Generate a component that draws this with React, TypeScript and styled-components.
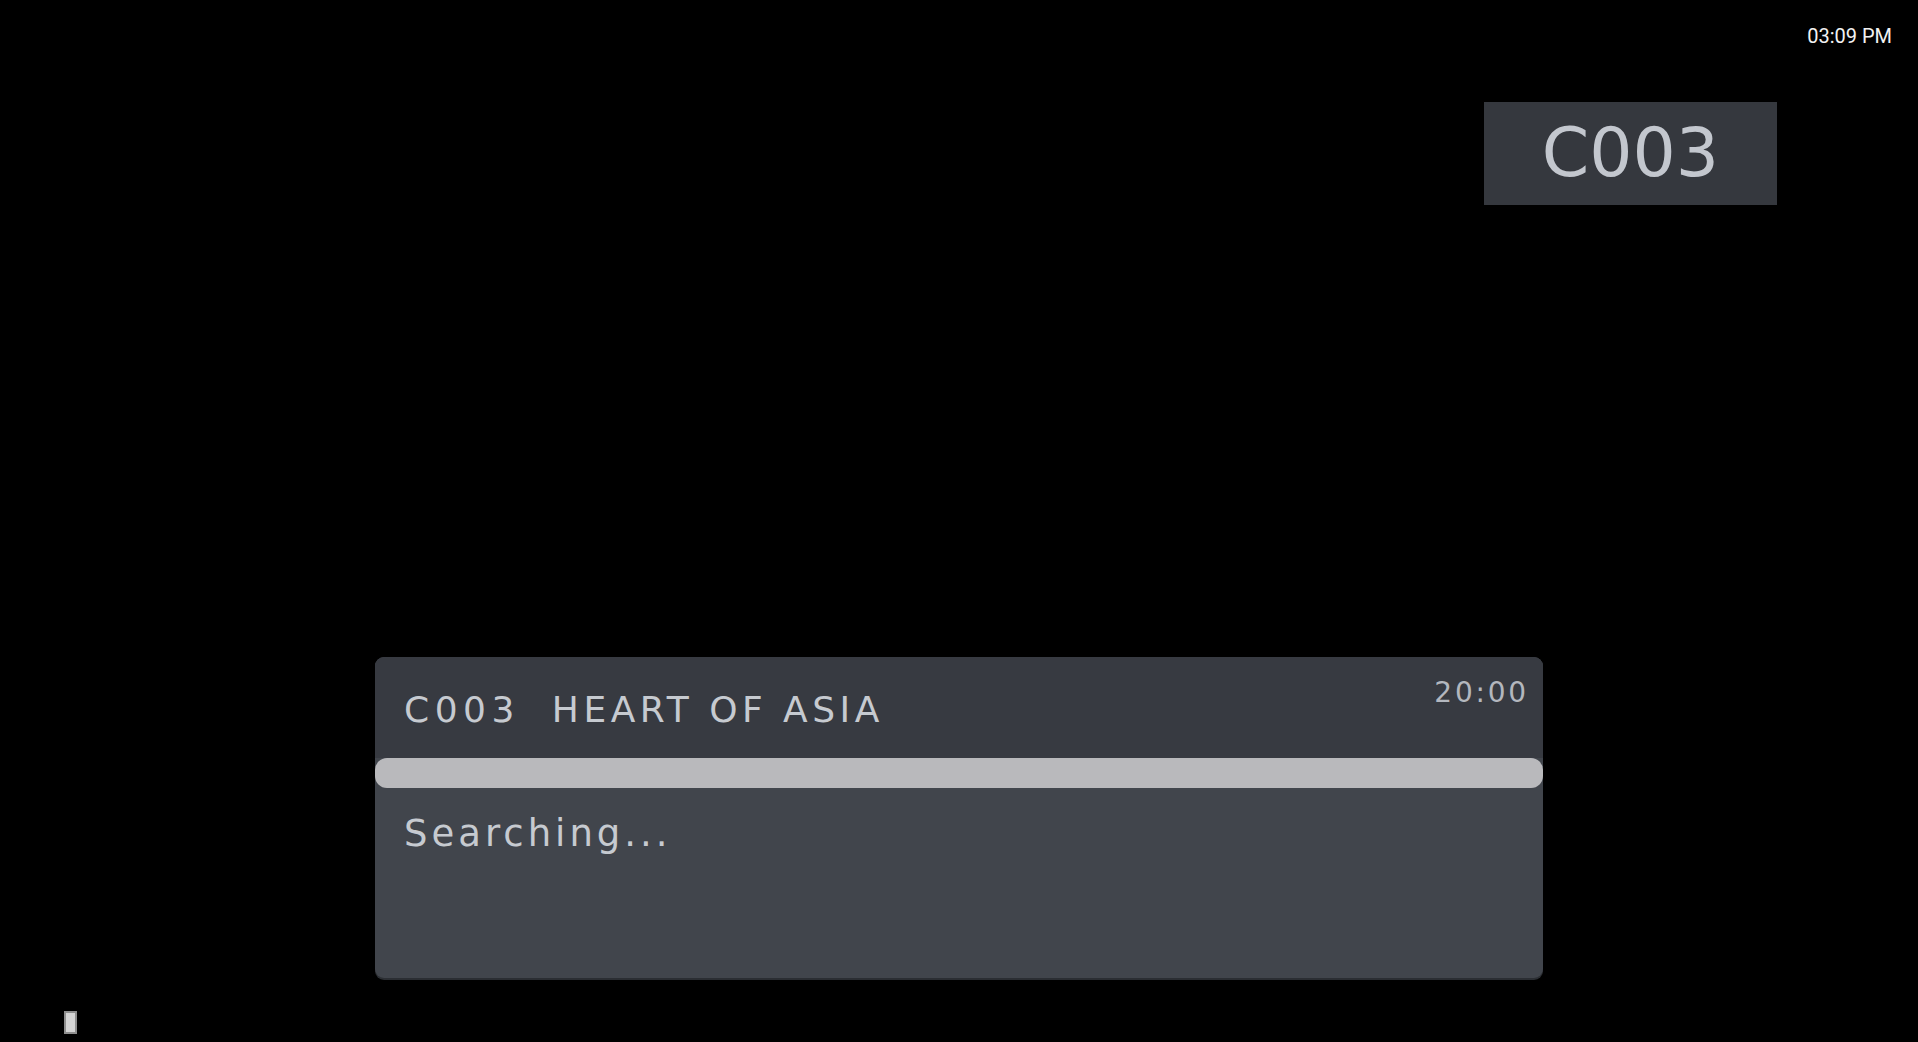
import styled, { createGlobalStyle } from "styled-components";

const GlobalStyle = createGlobalStyle`
  html, body {
    margin: 0;
    padding: 0;
    background: #000;
  }
  * {
    box-sizing: border-box;
  }
`;

const Screen = styled.div`
  width: 100vw;
  height: 100vh;
  overflow: hidden;
  background: #000;
  display: flex;
  flex-direction: column;
`;

const StatusBar = styled.div`
  display: flex;
  justify-content: flex-end;
  padding: 24px 26px 0 0;
`;

const Clock = styled.span`
  font-family: Roboto, "Noto Sans", sans-serif;
  font-size: 20px;
  line-height: 24px;
  color: #f2f2f2;
`;

const BadgeRow = styled.div`
  display: flex;
  justify-content: flex-end;
  padding-right: 141px;
  margin-top: 54px;
`;

const ChannelBadge = styled.div`
  width: 293px;
  height: 103px;
  background: #35383e;
  display: flex;
  align-items: center;
  justify-content: center;
  font-family: "DejaVu Sans", sans-serif;
  font-size: 68px;
  color: #c3c7ce;
  padding-bottom: 2px;
`;

const Panel = styled.div`
  width: 1168px;
  margin: 452px auto 0;
  border-radius: 9px;
  overflow: hidden;
  background: #41454c;
  box-shadow: 0 2px 0 #2b2e33;
  display: flex;
  flex-direction: column;
`;

const PanelHeader = styled.div`
  height: 101px;
  background: #373a41;
  display: flex;
  justify-content: space-between;
  align-items: flex-start;
  padding: 0 14px 0 29px;
  font-family: "DejaVu Sans", sans-serif;
  color: #c6cad0;
`;

const Title = styled.div`
  display: flex;
  gap: 32px;
  margin-top: 35px;
  font-size: 36px;
  line-height: 36px;
  letter-spacing: 4.5px;
`;

const ChannelNo = styled.span`
  letter-spacing: 5.5px;
`;

const Time = styled.div`
  margin-top: 22px;
  font-size: 28px;
  line-height: 28px;
  letter-spacing: 2.8px;
  color: #b3b7be;
`;

const ProgressTrack = styled.div`
  height: 30px;
  background: #b9b9bc;
  border-radius: 12px;
`;

const PanelBody = styled.div`
  height: 190px;
  padding: 27px 29px 0;
  font-family: "DejaVu Sans", sans-serif;
  font-size: 37px;
  line-height: 37px;
  letter-spacing: 4px;
  color: #c6cad0;
`;

const Footer = styled.div`
  display: flex;
  padding-left: 64px;
  margin-top: 33px;
`;

const Caret = styled.div`
  width: 13px;
  height: 23px;
  background: #d4d4d4;
  border: 2px solid #8e8e8e;
`;

export default function App() {
  return (
    <>
      <GlobalStyle />
      <Screen>
        <StatusBar>
          <Clock>03:09 PM</Clock>
        </StatusBar>
        <BadgeRow>
          <ChannelBadge>C003</ChannelBadge>
        </BadgeRow>
        <Panel>
          <PanelHeader>
            <Title>
              <ChannelNo>C003</ChannelNo>
              <span>HEART OF ASIA</span>
            </Title>
            <Time>20:00</Time>
          </PanelHeader>
          <ProgressTrack />
          <PanelBody>Searching...</PanelBody>
        </Panel>
        <Footer>
          <Caret />
        </Footer>
      </Screen>
    </>
  );
}
